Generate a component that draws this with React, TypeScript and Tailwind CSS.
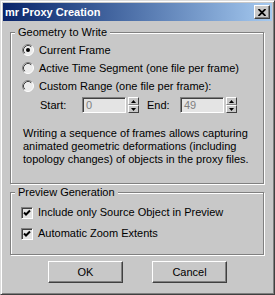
import type { ReactNode } from 'react';

// sunken radio like the classic windows control
function Radio({ checked = false }: { checked?: boolean }) {
  return (
    <svg width="12" height="12" viewBox="0 0 12 12" className="shrink-0">
      <circle cx="6" cy="6" r="5.5" fill="#ececec" />
      <path d="M2.11 9.89 A5.5 5.5 0 0 1 9.89 2.11" fill="none" stroke="#808080" />
      <path d="M9.89 2.11 A5.5 5.5 0 0 1 2.11 9.89" fill="none" stroke="#ffffff" />
      <path d="M2.82 9.18 A4.5 4.5 0 0 1 9.18 2.82" fill="none" stroke="#404040" />
      {checked && <circle cx="6" cy="6" r="2" fill="#000" />}
    </svg>
  );
}

function Check() {
  return (
    <div className="w-[12px] h-[12px] shrink-0 bg-[#e4e4e4] border border-t-[#808080] border-l-[#808080] border-b-white border-r-white shadow-[inset_1px_1px_0_#404040] flex items-center justify-center">
      <svg width="8" height="8" viewBox="0 0 8 8">
        <path d="M1 3.5 L3 5.5 L7 1.5" fill="none" stroke="#000" strokeWidth="2" />
      </svg>
    </div>
  );
}

function SpinField({ value }: { value: string }) {
  return (
    <div className="flex items-center gap-[2px]">
      <div className="w-[44px] h-[16px] bg-[#e4e4e4] border border-t-[#808080] border-l-[#808080] border-b-white border-r-white shadow-[inset_1px_1px_0_#404040] pl-[3px] flex items-center text-[#808080]">
        {value}
      </div>
      <div className="w-[11px] h-[16px] flex flex-col">
        <div className="h-[8px] flex items-center justify-center bg-[#c8c8c8] border border-t-white border-l-white border-b-[#808080] border-r-[#404040]">
          <svg width="5" height="3" viewBox="0 0 5 3">
            <path d="M2.5 0 L5 3 L0 3 Z" fill="#000" />
          </svg>
        </div>
        <div className="h-[8px] flex items-center justify-center bg-[#c8c8c8] border border-t-white border-l-white border-b-[#404040] border-r-[#404040]">
          <svg width="5" height="3" viewBox="0 0 5 3">
            <path d="M0 0 L5 0 L2.5 3 Z" fill="#000" />
          </svg>
        </div>
      </div>
    </div>
  );
}

function Group({ label, className, children }: { label: string; className: string; children: ReactNode }) {
  return (
    <div className={`relative ml-[7px] w-[254px] border border-[#808080] shadow-[inset_1px_1px_0_#fff,1px_1px_0_#fff] ${className}`}>
      <span className="absolute -top-[7px] left-[4px] bg-[#c8c8c8] px-[3px]">{label}</span>
      {children}
    </div>
  );
}

function Button({ children }: { children: ReactNode }) {
  return (
    <button className="w-[75px] h-[22px] bg-[#c8c8c8] border border-t-white border-l-white border-b-[#404040] border-r-[#404040] shadow-[inset_-1px_-1px_0_#808080] flex items-center justify-center">
      {children}
    </button>
  );
}

export default function App() {
  return (
    <div className="w-[275px] h-[295px] bg-[#c8c8c8] border border-t-[#dcdcdc] border-l-[#dcdcdc] border-b-[#404040] border-r-[#404040] shadow-[inset_1px_1px_0_#fff,inset_-1px_-1px_0_#808080] p-[2px] text-[11px] leading-[13px] text-black font-['Liberation_Sans',Arial,sans-serif]">
      {/* title bar */}
      <div className="h-[18px] flex items-center justify-between pl-[2px] pr-[2px] bg-linear-to-r from-[#0a246a] to-[#a6caf0]">
        <span className="text-white font-bold">mr Proxy Creation</span>
        <div className="w-[16px] h-[14px] bg-[#c8c8c8] border border-t-white border-l-white border-b-[#404040] border-r-[#404040] shadow-[inset_-1px_-1px_0_#808080] flex items-center justify-center">
          <svg width="8" height="7" viewBox="0 0 8 7">
            <path d="M0.5 0 L7.5 7 M7.5 0 L0.5 7" stroke="#000" strokeWidth="1.8" />
          </svg>
        </div>
      </div>

      <Group label="Geometry to Write" className="mt-[11px] h-[152px] pt-[8px] pl-[11px]">
        <div className="h-[18px] flex items-center gap-[5px]">
          <Radio checked />
          <span>Current Frame</span>
        </div>
        <div className="h-[18px] flex items-center gap-[5px]">
          <Radio />
          <span>Active Time Segment (one file per frame)</span>
        </div>
        <div className="h-[18px] flex items-center gap-[5px]">
          <Radio />
          <span>Custom Range (one file per frame):</span>
        </div>
        <div className="mt-[2px] h-[16px] ml-[18px] flex items-center">
          <span className="w-[42px]">Start:</span>
          <SpinField value="0" />
          <span className="w-[33px] ml-[8px]">End:</span>
          <SpinField value="49" />
        </div>
        <p className="mt-[14px] ml-[1px]">
          Writing a sequence of frames allows capturing
          <br />
          animated geometric deformations (including
          <br />
          topology changes) of objects in the proxy files.
        </p>
      </Group>

      <Group label="Preview Generation" className="mt-[8px] h-[63px] pt-[9px] pl-[10px]">
        <div className="h-[21px] flex items-center gap-[5px]">
          <Check />
          <span>Include only Source Object in Preview</span>
        </div>
        <div className="h-[21px] flex items-center gap-[5px]">
          <Check />
          <span>Automatic Zoom Extents</span>
        </div>
      </Group>

      <div className="mt-[6px] ml-[45px] flex gap-[29px]">
        <Button>OK</Button>
        <Button>Cancel</Button>
      </div>
    </div>
  );
}
